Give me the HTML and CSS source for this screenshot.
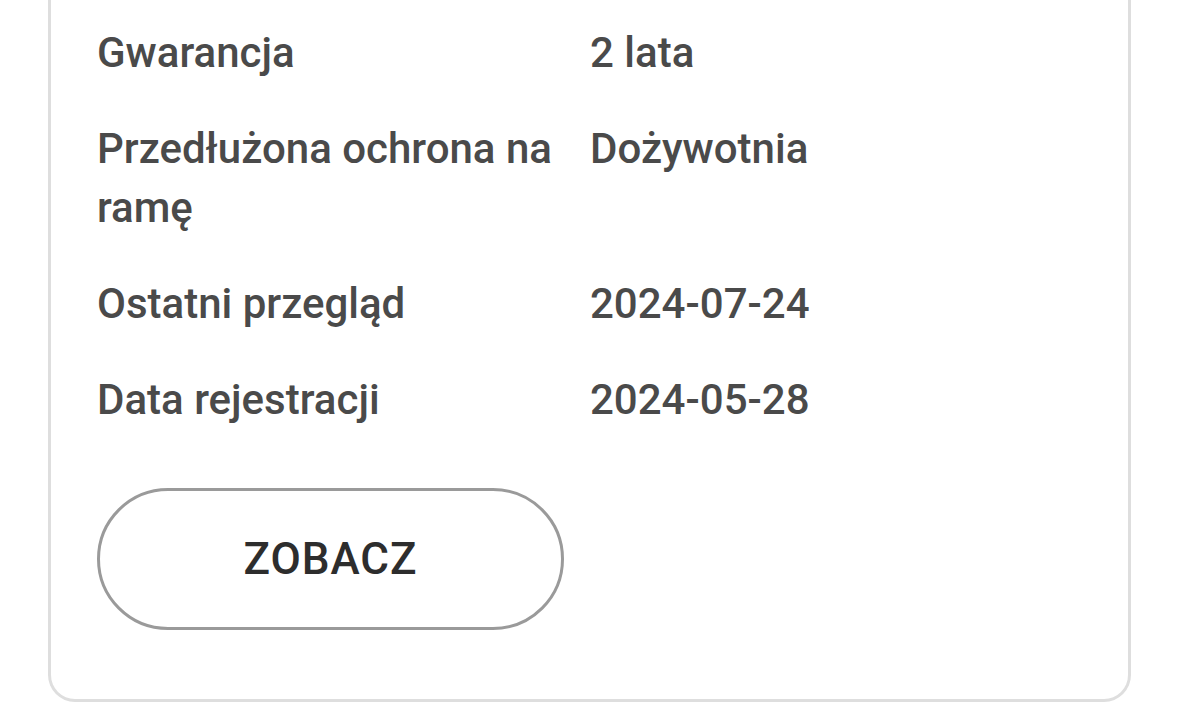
FILE: index.html
```html
<!DOCTYPE html>
<html lang="pl">
  <head>
    <meta charset="UTF-8" />
    <meta name="viewport" content="width=device-width, initial-scale=1.0" />
    <title>Rower</title>
    <link rel="stylesheet" href="styles.css">
  </head>
  <body>
    <div class="card">
      <dl class="specs">
        <dt>Gwarancja</dt>
        <dd>2 lata</dd>
        <dt>Przedłużona ochrona na ramę</dt>
        <dd>Dożywotnia</dd>
        <dt>Ostatni przegląd</dt>
        <dd>2024-07-24</dd>
        <dt>Data rejestracji</dt>
        <dd>2024-05-28</dd>
      </dl>
      <button class="btn-outline" type="button">ZOBACZ</button>
    </div>
  </body>
</html>
```

FILE: styles.css
```css
/* Reset */
body {
  font-family: Roboto, "Liberation Sans", sans-serif;
  margin: 0;
  padding: 0;
  background-color: #fff;
  color: #4a4a4a;
}

/* Karta (górna część poza ekranem) */
.card {
  margin: 0 48px;
  padding: 23px 46px 69px;
  border: 3px solid #dedede;
  border-top: none;
  border-radius: 0 0 27px 27px;
  background-color: #fff;
}

/* Lista parametrów */
.specs {
  display: grid;
  grid-template-columns: 460px 1fr;
  column-gap: 33px;
  row-gap: 37px;
  margin: 0;
  font-size: 42px;
  font-weight: 500;
  line-height: 59px;
}
.specs dt,
.specs dd {
  margin: 0;
}

/* Przycisk */
.btn-outline {
  display: block;
  width: 467px;
  height: 142px;
  margin-top: 59px;
  border: 3px solid #9a9a9a;
  border-radius: 71px;
  background: #fff;
  color: #2d2d2d;
  font-family: inherit;
  font-size: 44px;
  font-weight: 500;
  letter-spacing: 1px;
  cursor: pointer;
}
```
